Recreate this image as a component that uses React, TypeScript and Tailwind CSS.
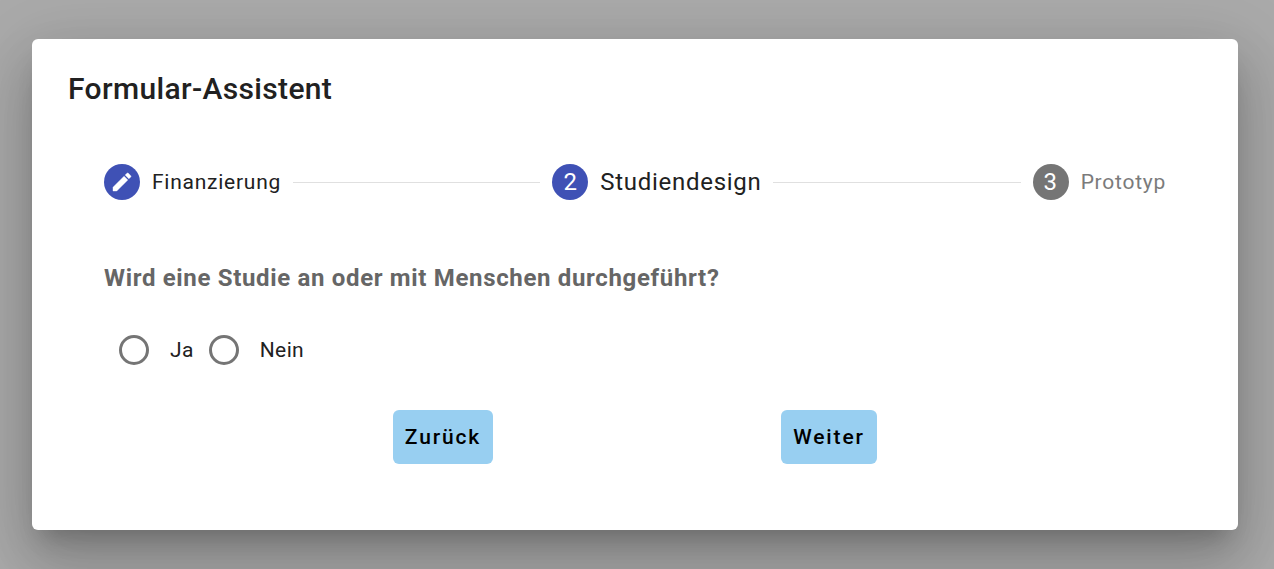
const steps = [
  { label: "Finanzierung", state: "done" },
  { label: "Studiendesign", state: "active" },
  { label: "Prototyp", state: "pending" },
];

function Pencil() {
  return (
    <svg viewBox="0 0 24 24" className="size-6 fill-white stroke-white" strokeWidth="0.4">
      <path d="M3 17.250V21h3.750L17.810 9.940l-3.750-3.750L3 17.250z" />
      <path d="M20.710 7.040a.996.996 0 0 0 0-1.410l-2.340-2.340a.996.996 0 0 0-1.410 0l-1.830 1.830 3.750 3.750 1.830-1.830z" />
    </svg>
  );
}

function Step({ index }: { index: number }) {
  const { label, state } = steps[index];
  const circle = state === "pending" ? "bg-[#757575] pr-px" : "bg-[#3f51b5]";
  const text =
    state === "active"
      ? "text-[24px] tracking-[0.72px] text-[#212121]"
      : state === "done"
        ? "text-[21px] tracking-[0.75px] text-[#212121]"
        : "text-[21px] tracking-[0.75px] text-[#7b7b7b]";
  return (
    <div className="flex shrink-0 items-center gap-3">
      <span className={`flex size-9 items-center justify-center rounded-full text-[24px] text-white ${circle}`}>
        {state === "done" ? <Pencil /> : index + 1}
      </span>
      <span className={`leading-9 ${text}`}>{label}</span>
    </div>
  );
}

function Radio({ label }: { label: string }) {
  return (
    <label className="flex items-center">
      <span className="size-[30px] rounded-full border-[3px] border-[#757575]" />
      <span className="ml-[21px] text-[21px] leading-[30px] tracking-[0.375px] text-[#212121]">{label}</span>
    </label>
  );
}

export default function App() {
  return (
    <div className="h-[569px] overflow-hidden bg-[#aaaaaa] pt-[39px] pl-8 font-['Roboto',sans-serif]">
      <main className="h-[491px] w-[1206px] rounded-md bg-white px-9 pt-8 shadow-[0_16px_22px_-10px_rgba(0,0,0,0.2),0_36px_57px_4px_rgba(0,0,0,0.14),0_14px_69px_12px_rgba(0,0,0,0.12)]">
        <h1 className="text-[30px] leading-[36px] font-medium tracking-[0.35px] text-[#212121]">Formular-Assistent</h1>
        <div className="mt-[57px] flex h-9 items-center pr-9 pl-9">
          <Step index={0} />
          <div className="mx-3 h-px flex-1 bg-[#e0e0e0]" />
          <Step index={1} />
          <div className="mx-3 h-px flex-1 bg-[#e0e0e0]" />
          <Step index={2} />
        </div>
        <p className="mt-[60px] pl-9 text-[24px] leading-9 font-bold tracking-[0.665px] text-[#666666]">
          Wird eine Studie an oder mit Menschen durchgeführt?
        </p>
        <div className="mt-9 flex h-[36px] items-center gap-[15px] pl-[51px]">
          <Radio label="Ja" />
          <Radio label="Nein" />
        </div>
        <div className="mt-[42px] flex gap-72 pl-[325px]">
          <button className="h-[54px] w-[100px] rounded-md bg-[#98cff1] pt-px text-[21px] font-medium tracking-[1.85px] text-black">Zurück</button>
          <button className="h-[54px] w-24 rounded-md bg-[#98cff1] pt-px text-[21px] font-medium tracking-[1.85px] text-black">Weiter</button>
        </div>
      </main>
    </div>
  );
}
